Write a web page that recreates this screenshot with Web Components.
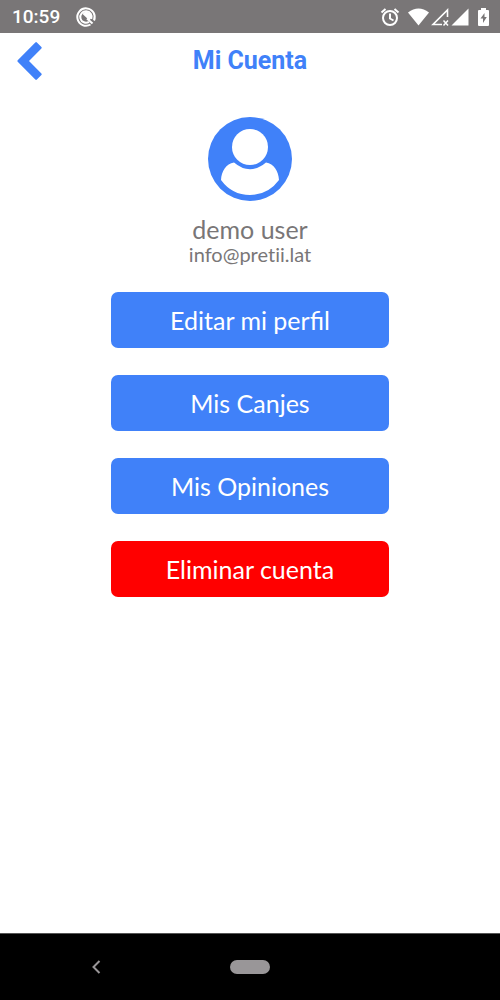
<!DOCTYPE html>
<html lang="es">
<head>
<meta charset="UTF-8">
<meta name="viewport" content="width=device-width, initial-scale=1">
<title>Mi Cuenta</title>
<style>
    body {
        margin: 0;
        background: #fff;
        font-family: Lato, sans-serif;
    }
</style>
</head>
<body>
<account-page></account-page>

<script>
class StatusBar extends HTMLElement {
    constructor() {
        super();
        this.attachShadow({ mode: 'open' });
        this.shadowRoot.innerHTML = `
            <style>
                :host {
                    display: flex;
                    align-items: center;
                    justify-content: space-between;
                    height: 33px;
                    padding: 0 10px 0 12px;
                    background: #797677;
                    color: #fff;
                    font: 500 19px/33px Roboto, sans-serif;
                }
                .left {
                    display: flex;
                    align-items: center;
                    gap: 15px;
                }
                .right {
                    display: flex;
                    align-items: center;
                }
                svg {
                    display: block;
                }
                .alarm {
                    margin-right: 8px;
                }
                .battery {
                    margin-left: 8px;
                }
            </style>
            <div class="left">
                <time><slot></slot></time>
                <svg width="22" height="22" viewBox="0 0 22 22" fill="none" stroke="#fff" stroke-width="2">
                    <path d="M15.500 18.500A8.700 8.700 0 1 1 19 14.500"/>
                    <path d="M14 15.800A5.700 5.700 0 1 1 16.300 13"/>
                    <path d="M7.500 8A5 5 0 0 1 16.500 11.500L14.500 14.500Z" fill="#fff" stroke="none"/>
                    <path d="M12 12.500l5.500 5"/>
                </svg>
            </div>
            <div class="right">
                <svg class="alarm" width="20" height="20" viewBox="0 0 20 20" fill="none" stroke="#fff" stroke-width="2">
                    <circle cx="10" cy="11" r="7"/>
                    <path d="M10 6.500v5l3.500 2"/>
                    <path d="M1.500 5.500l4-3.500M18.500 5.500l-4-3.500"/>
                </svg>
                <svg width="21" height="20" viewBox="0 0 21 20" fill="#fff">
                    <path d="M0 5.500Q10.500-2.500 21 5.500L10.500 18.500Z"/>
                </svg>
                <svg width="22" height="20" viewBox="0 0 22 20" fill="none" stroke="#fff">
                    <path d="M18.500 10V3L4 17.500h9" stroke-width="1.600"/>
                    <path d="M14.500 13.500l4.500 5M19 13.500l-4.500 5" stroke-width="1.500"/>
                </svg>
                <svg width="18" height="20" viewBox="0 0 18 20" fill="#fff">
                    <path d="M17.500 1.500v17H.5Z"/>
                </svg>
                <svg class="battery" width="13" height="20" viewBox="0 0 13 20">
                    <path d="M4 1h5v2H11q1 0 1 1v14q0 1-1 1H2q-1 0-1-1V4q0-1 1-1h2Z" fill="#fff"/>
                    <path d="M7.500 6l-4 5.500h2.500v4.500l3.800-6H7.500Z" fill="#797677"/>
                </svg>
            </div>
        `;
    }
}

class PageHeader extends HTMLElement {
    constructor() {
        super();
        this.attachShadow({ mode: 'open' });
        this.shadowRoot.innerHTML = `
            <style>
                :host {
                    display: grid;
                    grid-template-columns: 44px 1fr 44px;
                    align-items: center;
                    height: 55px;
                    color: #4081f9;
                }
                button {
                    justify-self: end;
                    padding: 0;
                    border: 0;
                    background: none;
                    color: inherit;
                    cursor: pointer;
                }
                svg {
                    display: block;
                }
                h1 {
                    margin: 0;
                    font: 700 25px/30px Roboto, sans-serif;
                    text-align: center;
                }
            </style>
            <button type="button" aria-label="Volver">
                <svg width="28" height="40" viewBox="0 0 28 40" fill="currentColor">
                    <path d="M19.300 1.500q.8-.8 1.600 0l4.500 4.500q.8.800 0 1.600L13 20l12.400 12.400q.8.800 0 1.600l-4.500 4.500q-.8.800-1.600 0L1.700 20.800q-.8-.8 0-1.600Z"/>
                </svg>
            </button>
            <h1><slot></slot></h1>
        `;
    }
}

class UserCard extends HTMLElement {
    constructor() {
        super();
        this.attachShadow({ mode: 'open' });
        this.shadowRoot.innerHTML = `
            <style>
                :host {
                    display: flex;
                    flex-direction: column;
                    align-items: center;
                    color: #797677;
                }
                svg {
                    display: block;
                    margin-bottom: 15px;
                }
                .name {
                    font-size: 25px;
                    line-height: 26px;
                }
                .email {
                    font-size: 20px;
                    line-height: 24px;
                    font-variant-ligatures: none;
                }
            </style>
            <svg width="84" height="84" viewBox="0 0 84 84">
                <circle cx="42" cy="42" r="42" fill="#4081f9"/>
                <circle cx="42" cy="30" r="18" fill="#fff"/>
                <path d="M26 45.500Q42 59 58 45.500C66 47 70.500 54 71 63Q60 78 42 78Q24 78 13 63C13.500 54 18 47 26 45.500Z" fill="#fff"/>
            </svg>
            <div class="name"><slot name="name"></slot></div>
            <div class="email"><slot name="email"></slot></div>
        `;
    }
}

class AccountButton extends HTMLElement {
    constructor() {
        super();
        this.attachShadow({ mode: 'open' });
        this.shadowRoot.innerHTML = `
            <style>
                :host {
                    display: block;
                }
                button {
                    display: block;
                    width: 100%;
                    height: 56px;
                    padding: 0;
                    border: 0;
                    border-radius: 7px;
                    background: #4081f9;
                    color: #fff;
                    font: 400 25px/56px Lato, sans-serif;
                    cursor: pointer;
                }
                :host([danger]) button {
                    background: #ff0000;
                }
            </style>
            <button type="button"><slot></slot></button>
        `;
    }
}

class SystemNav extends HTMLElement {
    constructor() {
        super();
        this.attachShadow({ mode: 'open' });
        this.shadowRoot.innerHTML = `
            <style>
                :host {
                    display: grid;
                    grid-template-columns: 1fr auto 1fr;
                    align-items: center;
                    height: 66px;
                    border-top: 1px solid #555;
                    background: #000;
                }
                button {
                    padding: 0;
                    border: 0;
                    background: none;
                    cursor: pointer;
                }
                .back {
                    margin-right: 38px;
                    justify-self: center;
                }
                .home {
                    width: 40px;
                    height: 14px;
                    border-radius: 7px;
                    background: #999698;
                }
                svg {
                    display: block;
                }
            </style>
            <button class="back" type="button" aria-label="Atrás">
                <svg width="10" height="14" viewBox="0 0 10 14" fill="none" stroke="#999698" stroke-width="2">
                    <path d="M8.500 1L2.500 7l6 6"/>
                </svg>
            </button>
            <button class="home" type="button" aria-label="Inicio"></button>
        `;
    }
}

class AccountPage extends HTMLElement {
    constructor() {
        super();
        this.attachShadow({ mode: 'open' });
        this.shadowRoot.innerHTML = `
            <style>
                :host {
                    display: flex;
                    flex-direction: column;
                    min-height: 100vh;
                }
                main {
                    flex: 1;
                    display: flex;
                    flex-direction: column;
                    align-items: center;
                    gap: 26px;
                    padding-top: 29px;
                }
                .actions {
                    display: flex;
                    flex-direction: column;
                    gap: 27px;
                    width: 100%;
                    max-width: 278px;
                }
            </style>
            <status-bar>10:59</status-bar>
            <page-header>Mi Cuenta</page-header>
            <main>
                <user-card>
                    <span slot="name">demo user</span>
                    <span slot="email">info@pretii.lat</span>
                </user-card>
                <div class="actions">
                    <account-button>Editar mi perfil</account-button>
                    <account-button>Mis Canjes</account-button>
                    <account-button>Mis Opiniones</account-button>
                    <account-button danger>Eliminar cuenta</account-button>
                </div>
            </main>
            <system-nav></system-nav>
        `;
    }
}

customElements.define('status-bar', StatusBar);
customElements.define('page-header', PageHeader);
customElements.define('user-card', UserCard);
customElements.define('account-button', AccountButton);
customElements.define('system-nav', SystemNav);
customElements.define('account-page', AccountPage);
</script>
</body>
</html>
